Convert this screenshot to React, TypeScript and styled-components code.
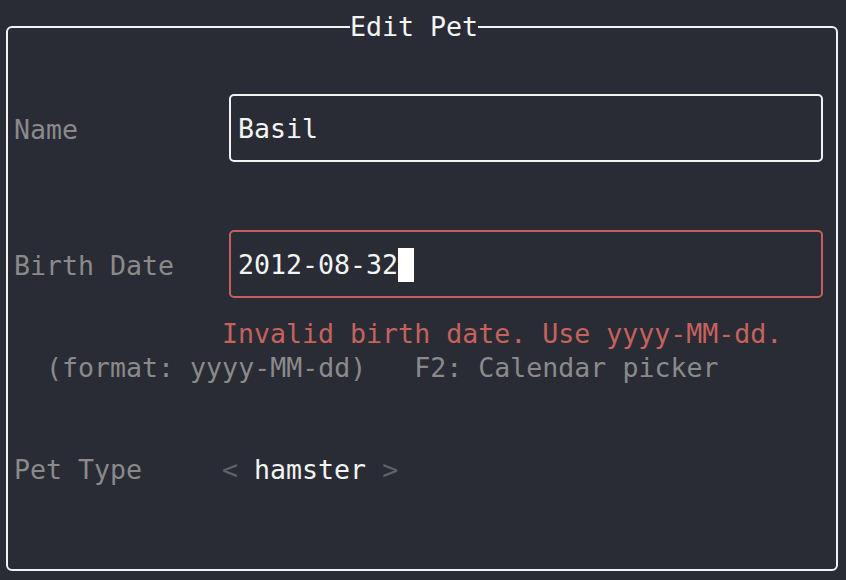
import React from "react";
import styled, { createGlobalStyle } from "styled-components";

const Global = createGlobalStyle`
  html, body {
    margin: 0;
    padding: 0;
    background: #292c34;
  }
  body {
    font-family: "DejaVu Sans Mono", "Liberation Mono", monospace;
    font-size: 26.6px;
    line-height: 34px;
    color: #f0f0f0;
  }
`;

const Screen = styled.div`
  width: 846px;
  height: 580px;
  box-sizing: border-box;
  padding: 10px 8px 0 6px;
  background: #292c34;
`;

const Frame = styled.fieldset`
  margin: 0;
  min-width: 0;
  width: 832px;
  height: 561px;
  box-sizing: border-box;
  border: 2px solid #f2f2f2;
  border-radius: 6px;
  padding: 0 0 0 6px;
`;

const Title = styled.legend`
  padding: 0;
  margin-left: 336px;
  line-height: 34px;
  color: #f4f4f4;
  white-space: pre;
`;

const Form = styled.div`
  display: flex;
  flex-direction: column;
  padding-top: 50px;
`;

const FieldRow = styled.div<{ $gap?: number; $height?: number }>`
  display: flex;
  align-items: center;
  height: ${(p) => p.$height ?? 68}px;
  margin-top: ${(p) => p.$gap ?? 0}px;
`;

const Label = styled.span<{ $width?: number }>`
  flex: none;
  width: ${(p) => p.$width ?? 215}px;
  padding-top: 3px;
  color: #8a8a8a;
  white-space: pre;
`;

const InputBox = styled.div<{ $invalid?: boolean }>`
  flex: none;
  display: flex;
  align-items: center;
  width: 594px;
  height: 68px;
  box-sizing: border-box;
  padding: 2px 0 0 7px;
  border: 2px solid ${(p) => (p.$invalid ? "#c2615d" : "#f2f2f2")};
  border-radius: 5px;
  color: #f4f4f4;
  white-space: pre;
`;

const Cursor = styled.span`
  display: inline-block;
  width: 16px;
  height: 34px;
  background: #ffffff;
`;

const Message = styled.div<{ $indent: number; $tone: "error" | "hint"; $gap?: number }>`
  height: 34px;
  padding-left: ${(p) => p.$indent}px;
  margin-top: ${(p) => p.$gap ?? 0}px;
  color: ${(p) => (p.$tone === "error" ? "#c6625e" : "#8a8a8a")};
  white-space: pre;
`;

const Selector = styled.span`
  padding-top: 3px;
  white-space: pre;
  color: #f4f4f4;
`;

const Arrow = styled.span`
  color: #5e6168;
`;

export default function App() {
  return (
    <>
      <Global />
      <Screen>
        <Frame>
          <Title>Edit Pet</Title>
          <Form>
            <FieldRow>
              <Label>Name</Label>
              <InputBox>Basil</InputBox>
            </FieldRow>
            <FieldRow $gap={68}>
              <Label>Birth Date</Label>
              <InputBox $invalid>
                2012-08-32
                <Cursor />
              </InputBox>
            </FieldRow>
            <Message $indent={208} $tone="error" $gap={19}>
              Invalid birth date. Use yyyy-MM-dd.
            </Message>
            <Message $indent={32} $tone="hint">
              {"(format: yyyy-MM-dd)   F2: Calendar picker"}
            </Message>
            <FieldRow $gap={66} $height={34}>
              <Label $width={208}>Pet Type</Label>
              <Selector>
                <Arrow>&lt;</Arrow>
                {" hamster "}
                <Arrow>&gt;</Arrow>
              </Selector>
            </FieldRow>
          </Form>
        </Frame>
      </Screen>
    </>
  );
}
